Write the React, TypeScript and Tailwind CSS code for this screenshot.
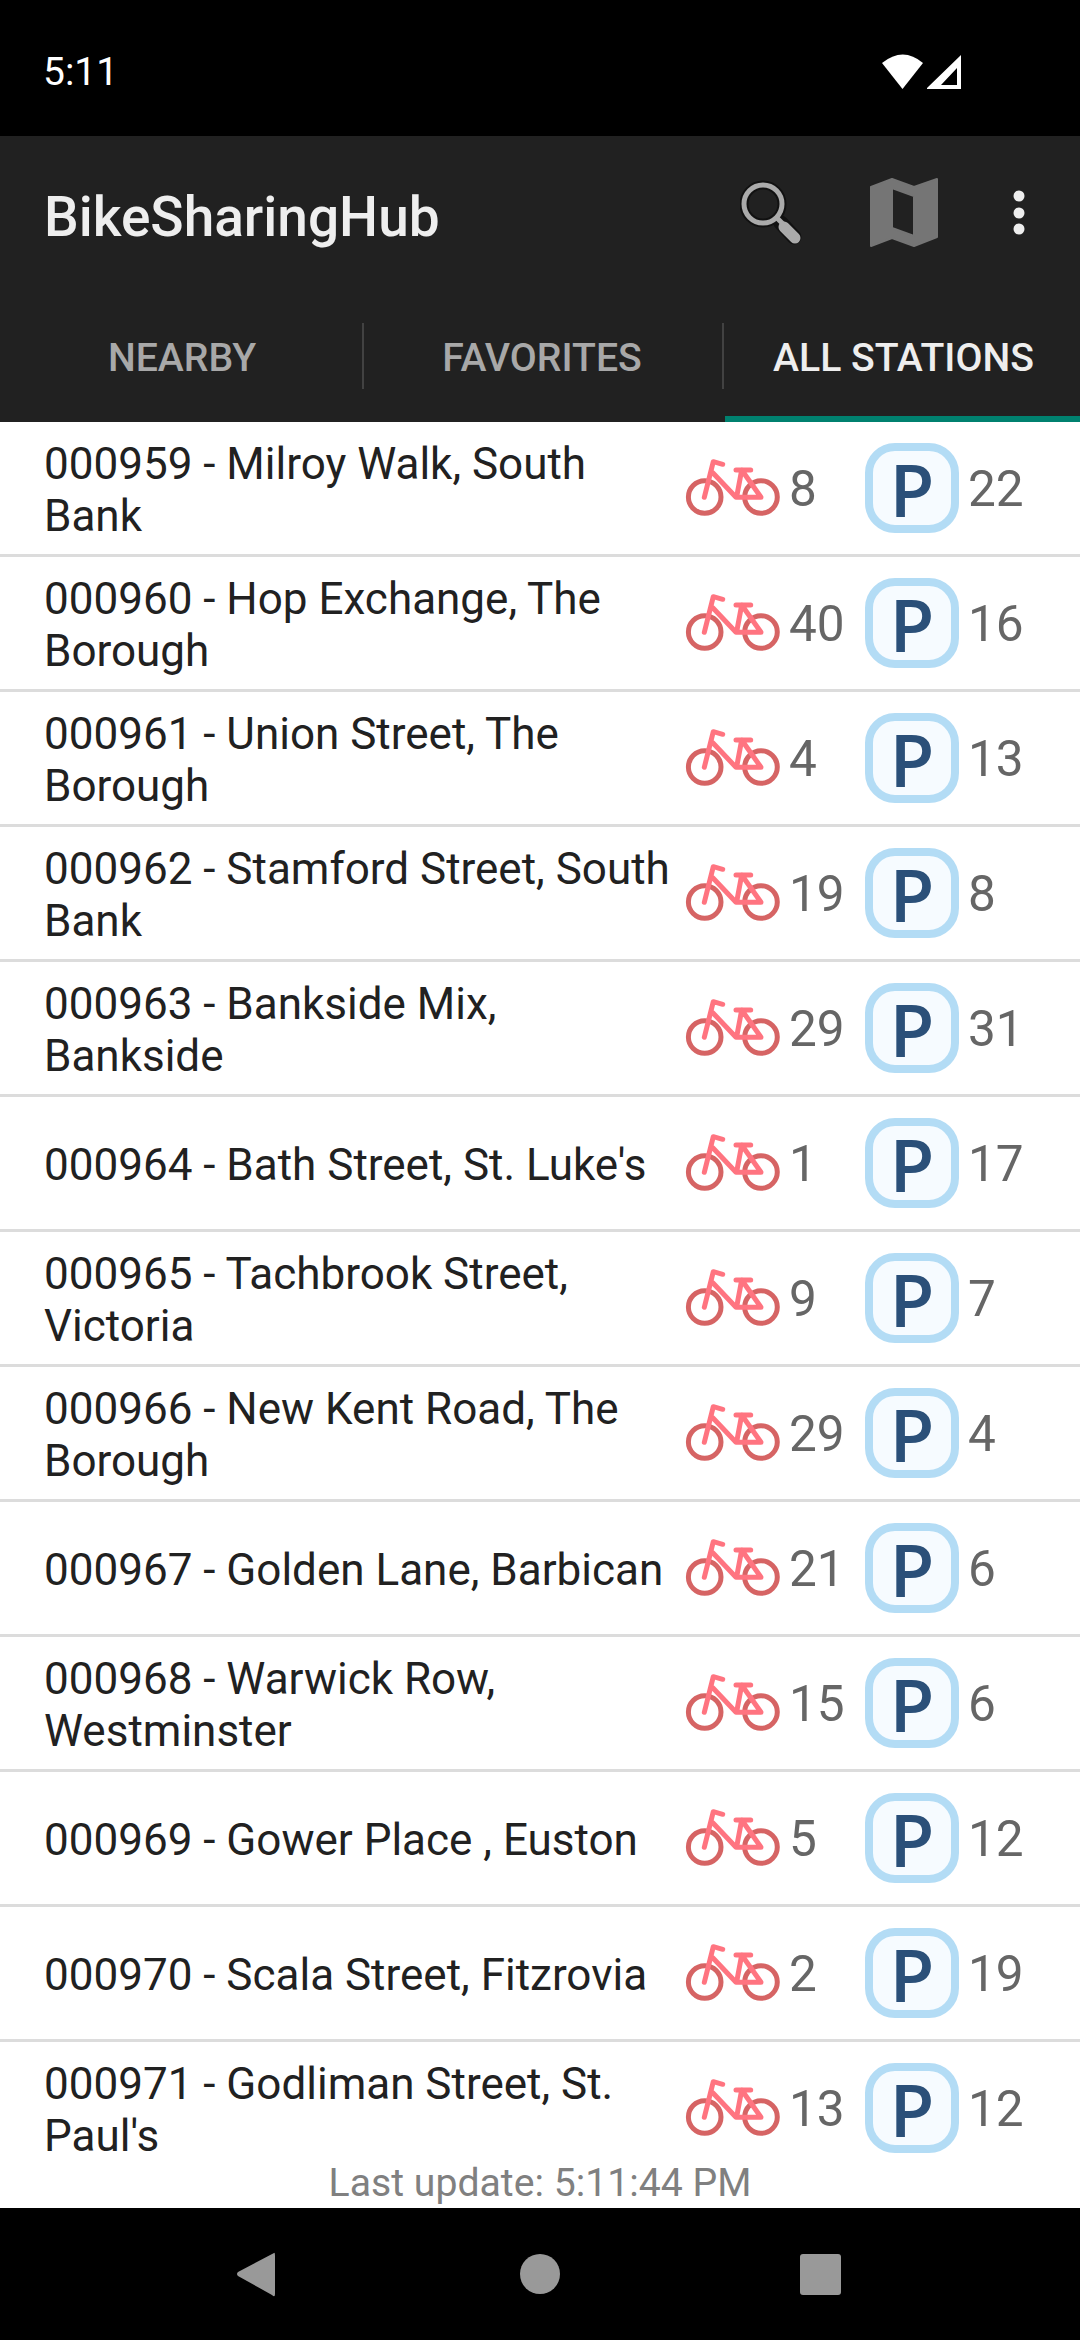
const stations = [
  { name: "000959 - Milroy Walk, South Bank", bikes: 8, docks: 22 },
  { name: "000960 - Hop Exchange, The Borough", bikes: 40, docks: 16 },
  { name: "000961 - Union Street, The Borough", bikes: 4, docks: 13 },
  { name: "000962 - Stamford Street, South Bank", bikes: 19, docks: 8 },
  { name: "000963 - Bankside Mix, Bankside", bikes: 29, docks: 31 },
  { name: "000964 - Bath Street, St. Luke's", bikes: 1, docks: 17 },
  { name: "000965 - Tachbrook Street, Victoria", bikes: 9, docks: 7 },
  { name: "000966 - New Kent Road, The Borough", bikes: 29, docks: 4 },
  { name: "000967 - Golden Lane, Barbican", bikes: 21, docks: 6 },
  { name: "000968 - Warwick Row, Westminster", bikes: 15, docks: 6 },
  { name: "000969 - Gower Place , Euston", bikes: 5, docks: 12 },
  { name: "000970 - Scala Street, Fitzrovia", bikes: 2, docks: 19 },
  { name: "000971 - Godliman Street, St. Paul's", bikes: 13, docks: 12 },
];

function BikeIcon() {
  return (
    <svg viewBox="0 8 100 80" className="h-[80px] w-[100px] shrink-0" fill="none" strokeLinecap="round" strokeLinejoin="round">
      <circle cx="24.7" cy="57" r="16.3" stroke="#d66464" strokeWidth="5" />
      <circle cx="81" cy="57" r="16.3" stroke="#d66464" strokeWidth="5" />
      <path
        d="M24.3 57.3 L33.3 21.7 L42.7 24.3 M33 33 L56 57.3 L81 57.3 L61.7 30 L57 55 M56 30 L70.7 30"
        stroke="#ff7480"
        strokeWidth="5"
      />
    </svg>
  );
}

function ParkingIcon() {
  return (
    <div
      className="flex h-[90px] w-[94px] shrink-0 items-center justify-center rounded-[30px] border-[8px] border-[#b3dcf5] bg-[#f6fbff] text-[73px] font-semibold leading-none text-[#2b5079]"
      style={{ fontFamily: "'Open Sans', sans-serif" }}
    >
      P
    </div>
  );
}

function StatusBar() {
  return (
    <div className="flex h-[136px] shrink-0 items-center justify-between bg-black pl-[43px] pr-[118px] pt-[8px] text-[39px] text-white">
      <span>5:11</span>
      <svg viewBox="0 0 80 36" className="h-[36px] w-[80px]">
        <path d="M0 9 Q21 -8 41 9 L20.5 35 Z" fill="#fff" />
        <path d="M45 34 L79 1 L79 35 L45 35 Z M59 31 L75 31 L75 14 Z" fill="#fff" fillRule="evenodd" />
      </svg>
    </div>
  );
}

function AppBar() {
  return (
    <div className="flex h-[164px] shrink-0 items-center bg-[#212121] pl-[44px]">
      <h1 className="flex-1 pb-[2px] text-[55px] font-medium text-[#eeeeee]">BikeSharingHub</h1>
      <svg viewBox="0 0 340 164" className="h-[164px] w-[340px]" fill="none">
        <circle cx="23" cy="68" r="19" stroke="#111" strokeWidth="9" />
        <path d="M41 87 L54 101" stroke="#111" strokeWidth="15" strokeLinecap="round" />
        <circle cx="23" cy="68" r="19" stroke="#aaaaaa" strokeWidth="5" />
        <path d="M37 82 L44 89" stroke="#aaaaaa" strokeWidth="5" />
        <path d="M44 91 L55 102" stroke="#aaaaaa" strokeWidth="11" strokeLinecap="round" />
        <path
          d="M131 51 L152 43 L174 51 L197 43 L197 101 L174 110 L152 102 L131 110 Z M152 52 L152 92 L174 100 L174 60 Z"
          fill="#757575"
          stroke="#757575"
          strokeWidth="2"
          strokeLinejoin="round"
          fillRule="evenodd"
        />
        <circle cx="279" cy="60" r="5.5" fill="#eeeeee" />
        <circle cx="279" cy="77" r="5.5" fill="#eeeeee" />
        <circle cx="279" cy="93" r="5.5" fill="#eeeeee" />
      </svg>
    </div>
  );
}

function Tabs() {
  const tabs = ["NEARBY", "FAVORITES", "ALL STATIONS"];

  return (
    <div className="grid h-[122px] shrink-0 grid-cols-3 bg-[#212121] text-[39.2px] font-medium">
      {tabs.map((tab, index) => (
        <div
          key={tab}
          className={`relative flex items-center justify-center pb-[6px] ${
            index === 2 ? "pl-[7px]" : "pl-[4px]"
          }`}
        >
          <span className={index === 2 ? "text-[#eeeeee]" : "text-[#a8a8a8]"}>{tab}</span>
          {index > 0 && <div className="absolute left-[2px] top-[23px] h-[66px] w-[2px] bg-[#424242]" />}
          {index === 2 && <div className="absolute bottom-0 left-[5px] right-0 h-[6px] bg-[#00816f]" />}
        </div>
      ))}
    </div>
  );
}

function StationRow({ name, bikes, docks }: { name: string; bikes: number; docks: number }) {
  return (
    <div className="flex h-[135px] shrink-0 items-center border-b-[3px] border-[#dcdcdc] pl-[44px]">
      <p className="w-[636px] shrink-0 pt-[3px] text-[44px] leading-[52px] text-[#212121]">{name}</p>
      <BikeIcon />
      <span className="ml-[9px] w-[76px] shrink-0 pt-[3px] text-[49.5px] text-[#666666]">{bikes}</span>
      <ParkingIcon />
      <span className="ml-[9px] pt-[3px] text-[49.5px] text-[#666666]">{docks}</span>
    </div>
  );
}

export default function App() {
  return (
    <main
      className="flex h-[2340px] w-[1080px] flex-col overflow-hidden bg-white"
      style={{ fontFamily: "Roboto, sans-serif" }}
    >
      <StatusBar />
      <AppBar />
      <Tabs />
      <div className="relative min-h-0 flex-1 overflow-hidden">
        <div className="flex flex-col">
          {stations.map((station) => (
            <StationRow key={station.name} {...station} />
          ))}
        </div>
        <p className="absolute bottom-0 left-0 right-0 bg-white text-center text-[39.2px] leading-[50px] text-[#808080]">
          Last update: 5:11:44 PM
        </p>
      </div>
      <div className="flex h-[132px] shrink-0 items-center justify-center bg-black">
        <svg viewBox="0 0 1080 132" className="h-[132px] w-[1080px]" fill="#999999">
          <path d="M274 45 Q275 44 275 48 L275 86 Q275 90 272 87 L238 68 Q236 66 238 64 Z" />
          <circle cx="540" cy="66" r="20" />
          <rect x="800" y="46" width="41" height="41" rx="3" />
        </svg>
      </div>
    </main>
  );
}
